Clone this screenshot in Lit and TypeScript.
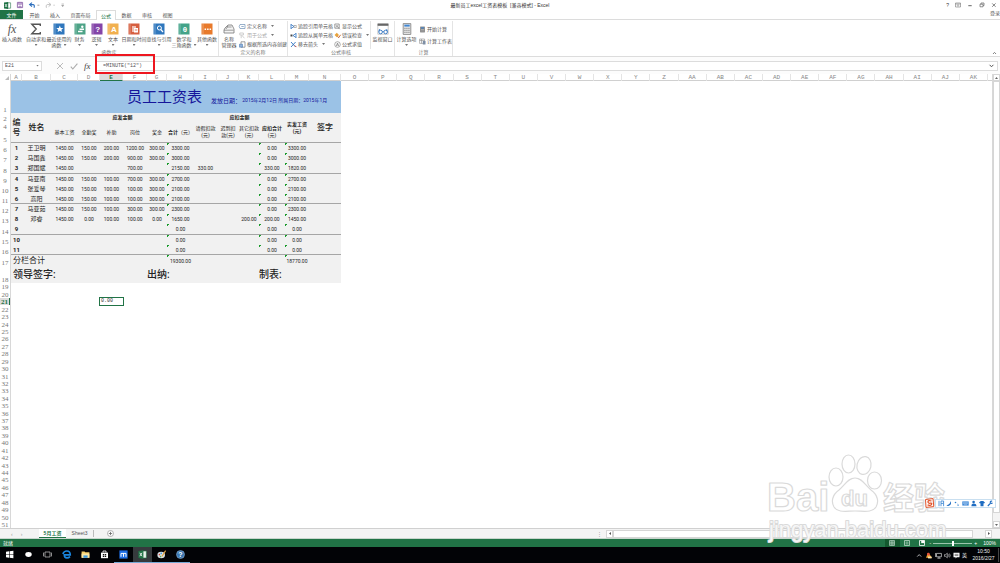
import { LitElement, html, svg, css, nothing } from "lit";
import { customElement } from "lit/decorators.js";
import { classMap } from "lit/directives/class-map.js";

const LETTERS = "ABCDEFGHIJKLMNOPQRSTUVWXYZ".split("");
const COLUMNS = [...LETTERS, ..."ABCDEFGHIJK".split("").map((l) => "A" + l)];

interface Person {
  no: string;
  name: string;
  pay: string[];
  line?: boolean;
  tall?: boolean;
}

// pay holds the columns C to M
const PEOPLE: Person[] = [
  { no: "1", name: "王卫明", pay: ["1450.00", "150.00", "200.00", "1200.00", "300.00", "3300.00", "", "", "", "0.00", "3300.00"] },
  { no: "2", name: "马国鑫", pay: ["1450.00", "150.00", "200.00", "900.00", "300.00", "3000.00", "", "", "", "0.00", "3000.00"] },
  { no: "3", name: "郑国斌", pay: ["1450.00", "", "", "700.00", "", "2150.00", "330.00", "", "", "330.00", "1820.00"], line: true, tall: true },
  { no: "4", name: "马亚南", pay: ["1450.00", "150.00", "100.00", "700.00", "300.00", "2700.00", "", "", "", "0.00", "2700.00"] },
  { no: "5", name: "张爱琴", pay: ["1450.00", "150.00", "100.00", "100.00", "300.00", "2100.00", "", "", "", "0.00", "2100.00"] },
  { no: "6", name: "高阳", pay: ["1450.00", "150.00", "100.00", "100.00", "300.00", "2100.00", "", "", "", "0.00", "2100.00"], line: true },
  { no: "7", name: "马亚茹", pay: ["1450.00", "150.00", "100.00", "300.00", "300.00", "2300.00", "", "", "", "0.00", "2300.00"] },
  { no: "8", name: "邓睿", pay: ["1450.00", "0.00", "100.00", "100.00", "0.00", "1650.00", "", "", "200.00", "200.00", "1450.00"] },
  { no: "9", name: "", pay: ["", "", "", "", "", "0.00", "", "", "", "0.00", "0.00"], line: true, tall: true },
  { no: "10", name: "", pay: ["", "", "", "", "", "0.00", "", "", "", "0.00", "0.00"] },
  { no: "11", name: "", pay: ["", "", "", "", "", "0.00", "", "", "", "0.00", "0.00"], line: true },
];

const FORMULA_COLUMNS = [5, 9, 10];

const book = (color: string, glyph: unknown) => svg`
  <rect x="0.5" y="0.5" width="11" height="11" fill=${color}/>
  <path d="M2 .5V11.5" stroke="#fff" stroke-opacity=".45" stroke-width=".7"/>${glyph}`;
const mark = (t: string) =>
  svg`<text x="6.8" y="9" text-anchor="middle" font-size="8" font-weight="bold" font-family="Liberation Sans" fill="#fff">${t}</text>`;

const FUNCTION_BUTTONS: { label: string[]; icon: unknown; arrow?: boolean }[] = [
  { label: ["插入函数"], icon: svg`<text x="6" y="9.5" text-anchor="middle" font-size="12" font-style="italic" font-family="Liberation Serif" fill="#555">fx</text>` },
  { label: ["自动求和"], arrow: true, icon: svg`<path d="M10.3 3V1.2H1.8L6.2 6 1.8 10.8H10.3V9" fill="none" stroke="#555" stroke-width="1.4"/>` },
  { label: ["最近使用的", "函数"], arrow: true, icon: book("#2f77bd", svg`<path d="M6.8 2.6l1 2.3 2.5.2-1.9 1.6.6 2.4-2.2-1.3-2.2 1.3.6-2.4-1.9-1.6 2.5-.2z" fill="#fff"/>`) },
  { label: ["财务"], arrow: true, icon: book("#4da387", svg`<path d="M4 7.8h4.5v1.5H4zM5.5 5.6H10v1.4H5.5z" fill="#fff"/><circle cx="8.3" cy="3.7" r="1.2" fill="#fff"/>`) },
  { label: ["逻辑"], arrow: true, icon: book("#8445a8", mark("?")) },
  { label: ["文本"], arrow: true, icon: book("#f1b04f", mark("A")) },
  { label: ["日期和时间"], arrow: true, icon: book("#d65f40", svg`<path d="M4 3h4v6H4z" fill="#fff" fill-opacity=".6"/><path d="M6 5h4v4.5H6z" fill="#fff"/><path d="M6.8 7h2.5" stroke="#d65f40" stroke-width=".8"/>`) },
  { label: ["查找与引用"], arrow: true, icon: book("#2f77bd", svg`<circle cx="6.4" cy="5" r="2" fill="none" stroke="#fff"/><path d="M7.8 6.5L10 9" stroke="#fff" stroke-width="1.2"/>`) },
  { label: ["数学和", "三角函数"], arrow: true, icon: book("#43a389", mark("θ")) },
  { label: ["其他函数"], arrow: true, icon: book("#e87a2c", svg`<path d="M3.6 6.2h1.5M6.1 6.2h1.5M8.6 6.2h1.5" stroke="#fff" stroke-width="1.4"/>`) },
];

type Small = { label: string; icon: unknown; arrow?: boolean; off?: boolean };
const NAME_ITEMS: Small[] = [
  { label: "定义名称", arrow: true, icon: svg`<path d="M1 1.5h5v4H1l-.8-2z" fill="#fff" stroke="#6d8fb5" stroke-width=".7"/><path d="M2.3 3.5h2.5" stroke="#6d8fb5" stroke-width=".7"/>` },
  { label: "用于公式", arrow: true, off: true, icon: svg`<path d="M.8 1h3.6v2H.8zM3 3.5l2.5 2.8M2.2 3.4v2.8" fill="none" stroke="#bbb" stroke-width=".7"/>` },
  { label: "根据所选内容创建", icon: svg`<path d="M2 .8h4v5.4H2z" fill="#fff" stroke="#777" stroke-width=".7"/><path d="M.5 3.2h3v3h-3z" fill="#8fb2da" stroke="#3b6fae" stroke-width=".5"/>` },
];
const TRACE_ITEMS: Small[] = [
  { label: "追踪引用单元格", icon: svg`<path d="M1 1v5M1 1.5l3 2-3 2" fill="none" stroke="#2d72c0" stroke-width=".8"/><path d="M4 2.5h2.3v2H4z" fill="#fff" stroke="#777" stroke-width=".5"/>` },
  { label: "追踪从属单元格", icon: svg`<path d="M6 1v5M6 1.5l-3 2 3 2" fill="none" stroke="#2d72c0" stroke-width=".8"/><path d="M.5 2.5h2v2h-2z" fill="#444"/>` },
  { label: "移去箭头", arrow: true, icon: svg`<path d="M1 1l4.6 5M5.6 1L1 6" stroke="#2d72c0" stroke-width=".9"/><path d="M4.8 4.5l1.6 1.6" stroke="#d2493a" stroke-width="1"/>` },
];
const CHECK_ITEMS: Small[] = [
  { label: "显示公式", icon: svg`<path d="M.8 1h4.4v4.2H.8zM2 2.2l3.8 4M2 4.4l2-2.2" fill="none" stroke="#777" stroke-width=".7"/>` },
  { label: "错误检查", arrow: true, icon: svg`<path d="M2.8.8l2.2 2.2-2.2 2.2L.6 3z" fill="#e8a33a"/><path d="M3.6 4.2l1 1.6 2-3" fill="none" stroke="#c4622a" stroke-width=".9"/>` },
  { label: "公式求值", icon: svg`<circle cx="3.5" cy="3.5" r="2.8" fill="#fff" stroke="#777" stroke-width=".6"/><path d="M2.3 5l1.2-3 1.2 3M2.8 4h1.4" fill="none" stroke="#555" stroke-width=".5"/>` },
];
const CALC_ITEMS: Small[] = [
  { label: "开始计算", icon: svg`<path d="M1.2.6h4.6v5.8H1.2z" fill="#777"/><path d="M2 1.3h3v1.2H2z" fill="#4d8ed6"/><path d="M2 3.6h3M2 5h3" stroke="#fff" stroke-width=".6" stroke-dasharray=".7 .4"/>` },
  { label: "计算工作表", icon: svg`<path d="M.6 1h5v4.4h-5zM.6 2.5h5M2.5 1v4.4" fill="#fff" stroke="#888" stroke-width=".6"/><path d="M3.8 3h2.7v3.5H3.8z" fill="#7d8ea5"/>` },
];

@customElement("app-root")
export class AppRoot extends LitElement {
  static styles = css`
    :host {
      display: grid;
      grid-template-rows: 10px 10px 37px 17px 1fr 11px 8px 16px;
      min-height: 100vh;
      position: relative;
      overflow: hidden;
      background: #fff;
      color: #555;
      font: 5px/6px "Liberation Sans", "Noto Sans CJK SC", sans-serif;
      --cols: 11px 29px 27px 22px 23px 24px 20px 27px 23px 22px 20px 26px 24px 32px;
    }
    * { box-sizing: border-box; }
    svg { display: block; flex: none; overflow: visible; }
    button, input { font: inherit; color: inherit; border: 0; padding: 0; margin: 0; background: none; }
    button { white-space: nowrap; }
    a { color: inherit; text-decoration: none; }

    .title { display: grid; grid-template-columns: 1fr auto 1fr; align-items: center; color: #333; }
    .quick { display: flex; align-items: center; gap: 6px; padding-left: 4px; }
    .window { display: flex; justify-content: flex-end; align-items: center; gap: 6px; padding-right: 3px; }

    .tabs { display: flex; border-bottom: 1px solid #dcdcdc; }
    .file { width: 23px; height: 9px; background: #217346; color: #fff; text-align: center; }
    .tablist { display: grid; grid-template-columns: 21px 20px 31px 20px 21px 20px 21px; margin-left: 1px; }
    .tab { height: 10px; }
    .tab.on { background: #fff; color: #217346; border: solid #dcdcdc; border-width: 1px 1px 0; }
    .login { margin-left: auto; }

    .ribbon { display: flex; border-bottom: 1px solid #dcdcdc; padding-top: 1px; position: relative; }
    .group { display: grid; grid-template-rows: 28px 7px; border-right: 1px solid #e4e4e4; }
    .caption { text-align: center; color: #777; }
    .bigs { display: grid; grid-template-columns: 24px 24px 22px 19px 15px 18px 24px 26px 24px 22px; }
    .big { display: flex; flex-direction: column; align-items: center; justify-content: flex-start; padding-top: 2px; }
    .big svg { margin-bottom: 1px; }
    .big span { display: flex; align-items: center; gap: 2px; }
    .arrow { width: 3px; height: 2px; background: #777; clip-path: polygon(0 0, 100% 0, 50% 100%); }
    .big .arrow { margin-top: 2px; }
    .big span .arrow { margin-top: 0; }
    .cols { display: flex; }
    .cols > .big { width: 20px; }
    .cols.wide { gap: 1px; padding-left: 2px; }
    .cols.calc { gap: 1px; }
    .cols.calc > .big { width: 23px; }
    .stack { display: grid; grid-auto-rows: 9px; align-content: center; }
    .stack.loose { grid-auto-rows: 12px; }
    .small { display: flex; align-items: center; gap: 1px; }
    .small .arrow { margin-left: 3px; }
    .small.off { color: #aaa; }
    .watch { border-left: 1px solid #e4e4e4; width: 24px; display: flex; justify-content: center; }
    .fold { position: absolute; right: 3px; bottom: 1px; }

    .formula { display: flex; align-items: center; padding: 0 2px; position: relative; background: #fcfcfc; }
    .namebox, .entry { height: 10px; border: 1px solid #dcdcdc; background: #fff; display: flex; align-items: center; font-family: "Liberation Mono", monospace; }
    .namebox { width: 40px; padding: 0 2px; }
    .namebox input { width: 31px; height: 8px; }
    .tools { width: 53px; display: flex; align-items: center; justify-content: flex-end; gap: 6px; padding-right: 3px; }
    .entry { flex: 1; padding: 0 3px 0 7px; }
    .entry input { flex: 1; min-width: 0; height: 8px; outline: none; }
    .callout { position: absolute; left: 95px; top: -3px; width: 60px; height: 20px; border: 2px solid #ee161f; }

    .sheet { display: grid; grid-template-columns: 11px 1fr 8px; grid-template-rows: 7px 1fr; }
    .corner { border-right: 1px solid #d8d8d8; display: flex; justify-content: flex-end; align-items: end; padding: 1px; }
    .letters { display: grid; grid-template-columns: var(--cols) repeat(23, 1fr); padding-right: 4px; border-bottom: 1px solid #d0d0d0; font: 6px/8px "Liberation Mono", monospace; text-align: center; color: #888; }
    .letters span { border-right: 1px solid #e4e4e4; height: 7px; }
    .letters .on { background: #dcdcdc; color: #217346; font-weight: bold; border-bottom: 1px solid #217346; }
    .numbers { display: grid; grid-template-rows: 32px 9px 8px 13px 10px 10px 11px 10px 10px 10px 10px 10px 11px 10px 10px 11px 17px repeat(33, minmax(0, 1fr)); font: 7px/6px "Liberation Serif", serif; color: #777; text-align: center; border-right: 1px solid #d8d8d8; }
    .numbers span { display: flex; align-items: end; justify-content: center; min-height: 0; }
    .numbers .on { background: #dcdcdc; color: #217346; font-weight: bold; border-right: 1px solid #217346; }
    .cells { display: grid; grid-template-rows: auto 1fr; min-width: 0; }
    .free { display: grid; grid-template-columns: var(--cols) 1fr; grid-template-rows: repeat(33, minmax(0, 1fr)); }
    .active { grid-column: 5; grid-row: 3; margin: -1px; padding-left: 1px; border: 1px solid #217346; background: #fff; color: #333; line-height: 6px; font-family: "Liberation Mono", monospace; }

    table { border-collapse: separate; border-spacing: 0; table-layout: fixed; width: 330px; background: #f1f1f1; color: #222; font: 5px/7px "Roboto", "Noto Sans CJK SC", sans-serif; }
    td, th { padding: 0; text-align: center; vertical-align: middle; font-weight: normal; white-space: nowrap; }
    .banner th { height: 32px; background: #9bc2e6; color: #16169b; }
    .heading { display: flex; align-items: center; padding-left: 116px; }
    .heading b { font-size: 15px; line-height: 18px; font-weight: normal; margin-right: 9px; }
    .heading i { font-style: normal; font-size: 6px; padding-top: 6px; }
    .heading em { font-style: normal; padding-top: 6px; white-space: pre; }
    .h9 { height: 9px; }
    .h21 { height: 21px; }
    .strong { font-weight: bold; }
    .mid { font-size: 8px; line-height: 10px; font-weight: 500; }
    .rule th, .rule td, th.rule { border-bottom: 1px solid #a6a6a6; }
    .person td, .person th { height: 10px; line-height: 8px; }
    .tall td, .tall th { height: 11px; }
    .person th { font-size: 6px; font-weight: bold; }
    .person .name { font-size: 6px; }
    td.flag { background: linear-gradient(135deg, #1a9a2c 1.5px, transparent 2px) no-repeat 0 0 / 3px 3px; }
    .sum td { height: 11px; line-height: 8px; }
    .sum .total, .sign td { text-align: left; padding-left: 2px; }
    .sum .total { font-size: 8px; line-height: 9px; }
    .sign td { height: 17px; font-size: 10px; line-height: 14px; font-weight: 500; }
    .sign .left { padding-left: 0; }

    .vbar { grid-row: 1 / 3; grid-column: 3; border-left: 1px solid #d8d8d8; display: grid; grid-template-rows: 7px 1fr 8px 7px; background: #f4f4f4; }
    .grip, .step { border: 1px solid #d6d6d6; background: #fff; display: grid; place-items: center; }

    .sheets { display: flex; align-items: center; background: #f4f4f4; border-top: 1px solid #d0d0d0; border-bottom: 1px solid #c9d6ce; }
    .walk { width: 39px; display: flex; gap: 8px; padding-left: 11px; color: #999; }
    .sheet-tab { height: 9px; line-height: 7px; width: 27px; }
    .sheet-tab.on { background: #fff; color: #217346; font-weight: bold; border-bottom: 1px solid #217346; }
    .add { border-left: 1px solid #bbb; padding-left: 13px; }
    .hbar { width: calc(40% - 6px); display: grid; grid-template-columns: 7px 1fr 12px 7px 8px; height: 8px; }
    .dots { margin-left: auto; margin-right: 4px; color: #999; }

    .status { display: flex; align-items: center; background: #217346; color: #fff; padding: 0 4px 0 3px; }
    .views { margin-left: auto; display: flex; }
    .view { width: 15px; height: 8px; display: grid; place-items: center; }
    .view.on { background: #14592f; }
    .zoom { display: flex; align-items: center; gap: 2px; }
    .zoom input { appearance: none; width: 39px; height: 6px; background: linear-gradient(#9cc5ad, #9cc5ad) center / 100% 1px no-repeat; }
    .zoom input::-webkit-slider-thumb { appearance: none; width: 2px; height: 5px; background: #fff; }
    .percent { margin-left: 4px; }

    .taskbar { display: flex; background: #020306; color: #eee; }
    .app { width: 19px; height: 16px; display: grid; place-items: center; border-bottom: 1px solid transparent; }
    .app.run { border-color: #76a9d6; }
    .app.front { background: #363a3d; }
    .tray { margin-left: auto; display: flex; align-items: center; gap: 2px; }
    .clock { width: 30px; text-align: center; line-height: 7px; border-right: 1px solid #444; margin-right: 1px; }

    .brand { position: absolute; right: 50px; bottom: 18px; width: 184px; height: 94px; pointer-events: none; }
    .ime { position: absolute; right: 4px; bottom: 55px; display: flex; align-items: center; height: 10px; }
    .ime .keys { display: flex; align-items: center; gap: 2px; height: 9px; padding: 0 2px; border: 1px solid #c9dff0; background: #fff; }
  `;

  private arrow() {
    return html`<i class="arrow"></i>`;
  }

  private big(b: { label: string[]; icon: unknown; arrow?: boolean }) {
    const two = b.label.length > 1;
    return html`<button class="big">
      <svg width="12" height="12" viewBox="0 0 12 12">${b.icon}</svg>
      <span>${b.label[0]}</span>
      ${two ? html`<span>${b.label[1]}${b.arrow ? this.arrow() : nothing}</span>` : b.arrow ? this.arrow() : nothing}
    </button>`;
  }

  private stack(items: Small[], loose = false) {
    return html`<div class=${classMap({ stack: true, loose })}>
      ${items.map(
        (s) => html`<button class=${classMap({ small: true, off: !!s.off })}>
          <svg width="7" height="7" viewBox="0 0 7 7">${s.icon}</svg>${s.label}${s.arrow ? this.arrow() : nothing}
        </button>`
      )}
    </div>`;
  }

  private titleBar() {
    return html`<header class="title">
      <div class="quick">
        <svg width="7" height="7" viewBox="0 0 7 7"><path d="M3 .8h3.6v5.4H3z" fill="#fff" stroke="#217346" stroke-width=".6"/><path d="M0 .6L4.2 0v7L0 6.4z" fill="#217346"/><path d="M1 2l2 3M3 2L1 5" stroke="#fff" stroke-width=".7"/></svg>
        <svg width="6" height="6" viewBox="0 0 6 6"><path d="M.4.4h5.2v5.2H.4z" fill="#fff" stroke="#8155a0" stroke-width=".8"/><path d="M1.4.4h3.2v2H1.4zM1.8 4h2.4v1.6H1.8z" fill="#c3a8d6" stroke="#8155a0" stroke-width=".4"/></svg>
        <svg width="10" height="7" viewBox="0 0 10 7"><path d="M3 .6L.6 2.6 3 4.6M.8 2.6h3.4q1.8.4.8 3.2" fill="none" stroke="#2d6fbd" stroke-width="1.1"/><path d="M8.4 3.2h2" stroke="#888" stroke-width=".8"/></svg>
        <svg width="10" height="7" viewBox="0 0 10 7"><path d="M3.6.6L6 2.6l-2.4 2M5.8 2.6H2.2q-1.8.4-.8 3.2" fill="none" stroke="#bbb" stroke-width=".9"/><path d="M8.4 3.2h1.4" stroke="#bbb" stroke-width=".8"/></svg>
        <svg width="4" height="6" viewBox="0 0 4 6"><path d="M.5 2h2.4M.7 3.4h2l-1 1.2z" stroke="#888" stroke-width=".5" fill="#888"/></svg>
      </div>
      <span>最新员工excel工资表模板&nbsp; [兼容模式] - Excel</span>
      <div class="window">
        <span>?</span>
        <svg width="6" height="6" viewBox="0 0 6 6"><path d="M.5 1h5v4h-5zM.5 2h5M3 4.6V2.8M2.2 3.5L3 2.7l.8.8" fill="none" stroke="#777" stroke-width=".6"/></svg>
        <svg width="6" height="6" viewBox="0 0 6 6"><path d="M1.3 3.7h3.4" stroke="#666"/></svg>
        <svg width="6" height="6" viewBox="0 0 6 6"><path d="M1 2.2h3v2.6H1zM2 2.2V1h3v2.6H4" fill="none" stroke="#666" stroke-width=".7"/></svg>
        <svg width="6" height="6" viewBox="0 0 6 6"><path d="M1.2 1.4l3.4 3.4M4.6 1.4L1.2 4.8" stroke="#666" stroke-width=".8"/></svg>
      </div>
    </header>`;
  }

  private ribbon() {
    return html`<section class="ribbon">
      <div class="group"><div class="bigs">${FUNCTION_BUTTONS.map((b) => this.big(b))}</div><div class="caption">函数库</div></div>
      <div class="group">
        <div class="cols">
          ${this.big({ label: ["名称", "管理器"], icon: svg`<path d="M2 5l3-3h4l2 4v4H1V7z" fill="#f4f4f4" stroke="#777" stroke-width=".8"/><path d="M1 7.2h9.6M4 4h4.6M5 2.8L3 6" stroke="#777" stroke-width=".7" fill="none"/>` })}
          ${this.stack(NAME_ITEMS)}
        </div>
        <div class="caption">定义的名称</div>
      </div>
      <div class="group">
        <div class="cols wide">
          ${this.stack(TRACE_ITEMS)} ${this.stack(CHECK_ITEMS)}
          <div class="watch">${this.big({ label: ["监视窗口"], icon: svg`<path d="M.8.8h10.4v10.4H.8z" fill="#fff" stroke="#aaa" stroke-width=".6"/><path d="M.6.6h10.8v2.2H.6z" fill="#666"/><circle cx="3.6" cy="9" r="1.8" fill="#fff" stroke="#2d72c0" stroke-width=".9"/><circle cx="8.6" cy="9" r="1.8" fill="#fff" stroke="#2d72c0" stroke-width=".9"/><path d="M5.4 8.6h1.4M1.8 8.4L2.6 6M10.4 8.4L9.6 6" stroke="#2d72c0" stroke-width=".8"/>` })}</div>
        </div>
        <div class="caption">公式审核</div>
      </div>
      <div class="group">
        <div class="cols calc">
          ${this.big({ label: ["计算选项"], arrow: true, icon: svg`<path d="M2.2.6h7.6v10.8H2.2z" fill="#eee" stroke="#777" stroke-width=".8"/><path d="M3.3 1.6h5.4v2H3.3z" fill="#3f86d2"/><path d="M3.3 5.2h5.4M3.3 7.2h5.4M3.3 9.2h5.4" stroke="#777" stroke-width="1.1" stroke-dasharray="1.3 .7"/>` })}
          ${this.stack(CALC_ITEMS, true)}
        </div>
        <div class="caption">计算</div>
      </div>
      <svg class="fold" width="5" height="4" viewBox="0 0 5 4"><path d="M1 3l1.5-1.6L4 3" fill="none" stroke="#666" stroke-width=".8"/></svg>
    </section>`;
  }

  private table() {
    return html`<table>
      <colgroup>
        ${[11, 29, 27, 22, 23, 24, 20, 27, 23, 22, 20, 26, 24, 32].map((w) => html`<col width=${w} />`)}
      </colgroup>
      <thead>
        <tr class="banner"><th colspan="14"><div class="heading"><b>员工工资表</b><i>发放日期：</i><em> 2015年2月12日 所属日期：2015年1月</em></div></th></tr>
        <tr>
          <th class="mid rule" rowspan="2">编<br />号</th><th class="mid rule" rowspan="2">姓名</th>
          <th class="h9 strong" colspan="6">应发金额</th><th class="h9 strong" colspan="4">应扣金额</th>
          <th class="strong rule" rowspan="2">实发工资<br />(元)</th><th class="mid rule" rowspan="2">签字</th>
        </tr>
        <tr>
          ${["基本工资", "全勤奖", "补助", "岗位", "奖金"].map((t) => html`<th class="rule h21">${t}</th>`)}
          <th class="rule h21"><b>合计</b>（元）</th>
          <th class="rule h21">请假扣款<br />(元)</th><th class="rule h21">迟到扣<br />款(元)</th>
          <th class="rule h21">其它扣款<br />(元)</th><th class="rule h21"><b>应扣合计</b><br />(元)</th>
        </tr>
      </thead>
      <tbody>
        ${PEOPLE.map(
          (p) => html`<tr class=${classMap({ person: true, rule: !!p.line, tall: !!p.tall })}>
            <th>${p.no}</th><td class="name">${p.name}</td>
            ${p.pay.map((v, i) => html`<td class=${classMap({ flag: FORMULA_COLUMNS.includes(i) })}>${v}</td>`)}
            <td></td>
          </tr>`
        )}
        <tr class="sum"><td class="total" colspan="7">分栏合计</td><td class="flag">19300.00</td><td colspan="4"></td><td class="flag">18770.00</td><td></td></tr>
        <tr class="sign"><td colspan="5">领导签字:</td><td></td><td colspan="4" class="left">出纳:</td><td></td><td colspan="3" class="left">制表:</td></tr>
      </tbody>
    </table>`;
  }

  private sheet() {
    const rows = [1, 2, ...Array.from({ length: 48 }, (_, i) => i + 4)];
    return html`<main class="sheet">
      <div class="corner"><svg width="4" height="4" viewBox="0 0 4 4"><path d="M4 0v4H0z" fill="#bbb"/></svg></div>
      <div class="letters">${COLUMNS.map((c) => html`<span class=${classMap({ on: c === "E" })}>${c}</span>`)}</div>
      <div class="numbers">${rows.map((r) => html`<span class=${classMap({ on: r === 21 })}>${r}</span>`)}</div>
      <div class="cells">${this.table()}<div class="free"><div class="active">0.00</div></div></div>
      <div class="vbar">
        <div class="step"><svg width="3" height="2" viewBox="0 0 3 2"><path d="M0 2L1.5 0 3 2z" fill="#666"/></svg></div>
        <div class="grip"></div><div></div>
        <div class="step"><svg width="3" height="2" viewBox="0 0 3 2"><path d="M0 0h3L1.5 2z" fill="#666"/></svg></div>
      </div>
    </main>`;
  }

  private bottomBars() {
    return html`<nav class="sheets">
        <div class="walk"><span>‹</span><span>›</span></div>
        <button class="sheet-tab on">5月工资</button><button class="sheet-tab">Sheet3</button>
        <button class="add" aria-label="新工作表"><svg width="7" height="7" viewBox="0 0 7 7"><circle cx="3.5" cy="3.5" r="3" fill="#fff" stroke="#888" stroke-width=".6"/><path d="M3.5 1.8v3.4M1.8 3.5h3.4" stroke="#666" stroke-width=".8"/></svg></button>
        <span class="dots">⋮</span>
        <div class="hbar">
          <div class="step"><svg width="2" height="3" viewBox="0 0 2 3"><path d="M2 0v3L0 1.5z" fill="#555"/></svg></div><div class="grip"></div><div></div>
          <div class="step"><svg width="2" height="3" viewBox="0 0 2 3"><path d="M0 0v3l2-1.5z" fill="#555"/></svg></div>
        </div>
      </nav>
      <footer class="status">
        <span>就绪</span>
        <div class="views">
          <div class="view on"><svg width="6" height="6" viewBox="0 0 6 6"><path d="M.5.5h5v5h-5zM.5 2.2h5M.5 3.9h5M2.2.5v5M3.9.5v5" fill="none" stroke="#cfe5d8" stroke-width=".6"/></svg></div>
          <div class="view"><svg width="6" height="6" viewBox="0 0 6 6"><path d="M.5.5h5v5h-5z" fill="none" stroke="#cfe5d8" stroke-width=".7"/><path d="M1.6 2h2.8M1.6 3h2.8M1.6 4h2.8" stroke="#cfe5d8" stroke-width=".5"/></svg></div>
          <div class="view"><svg width="6" height="6" viewBox="0 0 6 6"><path d="M.5.5h5v5h-5z" fill="none" stroke="#fff" stroke-width=".8"/><path d="M2.2.5h3.3v2.6H2.2z" fill="#fff"/></svg></div>
        </div>
        <div class="zoom"><span>-</span><input type="range" min="0" max="100" value="50" aria-label="缩放" /><span>+</span><span class="percent">100%</span></div>
      </footer>`;
  }

  private taskbar() {
    const apps: [string, unknown][] = [
      ["", svg`<path d="M1 1.8l3-.5v2.9H1zM4.6 1.2L8.4.7v3.5H4.6zM1 4.8h3v2.9l-3-.5zM4.6 4.8h3.8v3.5l-3.8-.5z" fill="#fff"/>`],
      ["", svg`<ellipse cx="4.5" cy="4.5" rx="3.2" ry="2.4" fill="#fff"/>`],
      ["", svg`<path d="M2 2h5v5H2zM.5 2.6v3.8M8.5 2.6v3.8" fill="none" stroke="#ccc" stroke-width=".7"/>`],
      ["", svg`<path d="M8 6.6Q6.6 8 4.8 7.9 2.3 7.6 2.3 4.9H8.3Q8.3 1 4.8 1 1.8 1 .9 4" fill="none" stroke="#1a86e0" stroke-width="1.6"/>`],
      ["", svg`<path d="M.6 1.4h3l.6.8h4.2v5.6H.6z" fill="#f5cf6b"/><path d="M.6 3.6h7.8v4.2H.6z" fill="#fbe6a2"/><path d="M2.4 5.4h4.2v2.4H2.4z" fill="#3f9be0"/>`],
      ["", svg`<path d="M1 2.6h7v5.6H1z" fill="#fff"/><path d="M3 2.6V1h3v1.6" fill="none" stroke="#fff" stroke-width=".8"/><path d="M2.8 4h1.4v1.2H2.8zM4.8 4h1.4v1.2H4.8zM2.8 5.7h1.4v1.2H2.8zM4.8 5.7h1.4v1.2H4.8z" fill="#111"/>`],
      ["run", svg`<path d="M.4.4h8.2v8.2H.4z" fill="#1f6fe8"/><path d="M2 6.8V3.4h5v3.4M4.5 3.4v3.4" fill="none" stroke="#fff" stroke-width="1"/>`],
      ["run front", svg`<path d="M4 1h4.4v7H4z" fill="#e7f2eb" stroke="#217346" stroke-width=".6"/><path d="M.4 1L5.4.2v8.6L.4 8z" fill="#217346"/><path d="M1.8 2.8l2.2 3.4M4 2.8L1.8 6.2" stroke="#fff" stroke-width=".8"/>`],
      ["run", svg`<ellipse cx="4.2" cy="5" rx="3.8" ry="3.2" fill="#d8dfe3"/><circle cx="2.4" cy="4.6" r=".8" fill="#d9483b"/><circle cx="4.2" cy="3.4" r=".8" fill="#3f9be0"/><circle cx="3.6" cy="6.6" r=".8" fill="#5aa84c"/><path d="M8.6.6L5 6.4" stroke="#e0a340" stroke-width="1.1"/>`],
      ["run", svg`<circle cx="4.5" cy="4.5" r="4" fill="#3a76b0" stroke="#9fc3e2" stroke-width=".5"/><text x="4.5" y="7" text-anchor="middle" font-size="7" font-weight="bold" fill="#fff">?</text>`],
    ];
    return html`<footer class="taskbar">
      ${apps.map(([c, icon]) => html`<div class="app ${c}"><svg width="9" height="9" viewBox="0 0 9 9">${icon}</svg></div>`)}
      <div class="tray">
        <svg width="7" height="7" viewBox="0 0 7 7"><path d="M1.2 4.6l2-2 2 2" fill="none" stroke="#ddd" stroke-width=".8"/></svg>
        <svg width="8" height="7" viewBox="0 0 8 7"><path d="M1 5.8L3 .8l2 2.2 2.2 3z" fill="#f0a030"/><circle cx="3.4" cy="2.2" r="1.4" fill="#e5523c"/><path d="M3 4.6h3.6v1.8H3z" fill="#f5e3b0"/></svg>
        <svg width="7" height="7" viewBox="0 0 7 7"><path d="M1.5 1.4H6.4v3.4H1.5zM4 4.8v1.4M2.4 6.2h3.2M.6 1v4" fill="none" stroke="#ddd" stroke-width=".7"/></svg>
        <svg width="7" height="7" viewBox="0 0 7 7"><path d="M.5 2.6h1.2l1.6-1.4v4.6L1.7 4.4H.5z" fill="none" stroke="#ddd" stroke-width=".6"/><path d="M4.4 2.4q.8 1.1 0 2.2M5.5 1.6q1.4 1.9 0 3.8" fill="none" stroke="#ddd" stroke-width=".6"/></svg>
        <svg width="7" height="7" viewBox="0 0 7 7"><path d="M.5.8h6v4.4H3.8L2.6 6.6V5.2H.5z" fill="#fff"/><path d="M1.6 2.3h3.8M1.6 3.6h3.8" stroke="#333" stroke-width=".6"/></svg>
        <span>英</span>
        <div class="clock">10:50<br />2016/2/27</div>
      </div>
    </footer>`;
  }

  private overlays() {
    return html`<svg class="brand" viewBox="0 0 184 94">
        <g fill="#fff" fill-opacity=".8" stroke="#dadada" stroke-width="1.2" stroke-linejoin="round">
          <text x="1" y="60" font-family="Liberation Sans" font-weight="bold" font-size="40">Bai</text>
          <ellipse cx="70" cy="26" rx="7" ry="9"/><ellipse cx="82.5" cy="13" rx="6.5" ry="9"/>
          <ellipse cx="98" cy="14.5" rx="7" ry="9" transform="rotate(12 98 14.5)"/><ellipse cx="108.5" cy="29.5" rx="7" ry="8.5"/>
          <path d="M89 27C82 27 79 34 73 39C66 44 65 51 68 56C72 62 80 60 89 60S106 62 110 56C113 51 112 44 105 39C99 34 96 27 89 27Z"/>
          <text x="75" y="55" font-family="Liberation Sans" font-weight="bold" font-size="22">du</text>
          <text x="117" y="58" font-family="Noto Sans CJK SC" font-weight="bold" font-size="31">经验</text>
          <text x="3" y="86" font-family="Liberation Sans" font-size="22" stroke-width="2" paint-order="stroke">jingyan.baidu.com</text>
        </g>
      </svg>
      <div class="ime">
        <svg width="11" height="10" viewBox="0 0 11 10"><path d="M1.5 1.5L9 .6l.8 8L2 9.4z" fill="#fff" stroke="#e2532b" stroke-width="1"/><path d="M7.5 3Q4 2 4 3.8T6.4 5.2 7 7Q5 8 3.6 6.8" fill="none" stroke="#e2532b" stroke-width="1.3"/></svg>
        <div class="keys">
          <svg width="6" height="7" viewBox="0 0 6 7"><path d="M1 .8v5.4M3 1h2.6v2.4H3zM3 3.4v2.8M5.6 3.4v2.8" fill="none" stroke="#2f7fd0" stroke-width=".8"/></svg>
          <svg width="6" height="7" viewBox="0 0 6 7"><path d="M4.6 1Q6 4.6 3 5.8 1.4 6.2.4 5.2 4 5 4.6 1z" fill="#1f6dc2"/></svg>
          <svg width="6" height="7" viewBox="0 0 6 7"><circle cx="1.5" cy="2.5" r=".8" fill="#2f7fd0"/><path d="M3.5 4.2q1.4.2.4 1.8" fill="none" stroke="#2f7fd0" stroke-width=".9"/></svg>
          <svg width="7" height="7" viewBox="0 0 7 7"><path d="M.3 1.4h6.4v4.2H.3z" fill="#3c88d8"/><path d="M1 2.6h5M1 3.6h5M2 4.7h3" stroke="#fff" stroke-width=".5" stroke-dasharray=".7 .4"/></svg>
          <svg width="6" height="7" viewBox="0 0 6 7"><circle cx="2.6" cy="2" r="1.3" fill="#1f6dc2"/><path d="M.4 6.2Q.4 3.4 3 3.6 5.6 4 5.6 6.2z" fill="#1f6dc2"/></svg>
          <svg width="6" height="7" viewBox="0 0 6 7"><path d="M1.8 1h2.4L6 2.4 5 3.6l-.5-.3V6.2h-3V3.3L1 3.6 0 2.4z" fill="#1f6dc2"/></svg>
          <svg width="6" height="7" viewBox="0 0 6 7"><path d="M.8 6L3.6 3.2" stroke="#1f6dc2" stroke-width="1.2"/><path d="M5.2 1.2Q3.4.8 3.2 2.4 3.8 4 5.6 3" fill="none" stroke="#1f6dc2" stroke-width="1.1"/></svg>
        </div>
      </div>`;
  }

  render() {
    return html`
      ${this.titleBar()}
      <nav class="tabs">
        <button class="file">文件</button>
        <div class="tablist">
          ${["开始", "插入", "页面布局", "公式", "数据", "审核", "视图"].map(
            (t) => html`<button class=${classMap({ tab: true, on: t === "公式" })}>${t}</button>`
          )}
        </div>
        <a class="login" href="#">登录</a>
      </nav>
      ${this.ribbon()}
      <div class="formula">
        <div class="namebox"><input value="E21" aria-label="名称框" />${this.arrow()}</div>
        <div class="tools">
          <svg width="8" height="8" viewBox="0 0 8 8"><path d="M1 1l6 6M7 1L1 7" stroke="#aaa" stroke-width=".8"/></svg>
          <svg width="8" height="8" viewBox="0 0 8 8"><path d="M.8 4.6l2 2.4 4.6-5.4" fill="none" stroke="#aaa" stroke-width="1.1"/></svg>
          <svg width="8" height="8" viewBox="0 0 8 8"><text x="0" y="6.5" font-size="9" font-style="italic" font-family="Liberation Serif" fill="#444">fx</text></svg>
        </div>
        <div class="entry"><input value='=MINUTE("12")' aria-label="编辑栏" /><svg width="5" height="4" viewBox="0 0 5 4"><path d="M.6.8l1.9 2 1.9-2" fill="none" stroke="#555"/></svg></div>
        <div class="callout"></div>
      </div>
      ${this.sheet()} ${this.bottomBars()} ${this.taskbar()} ${this.overlays()}
    `;
  }
}
